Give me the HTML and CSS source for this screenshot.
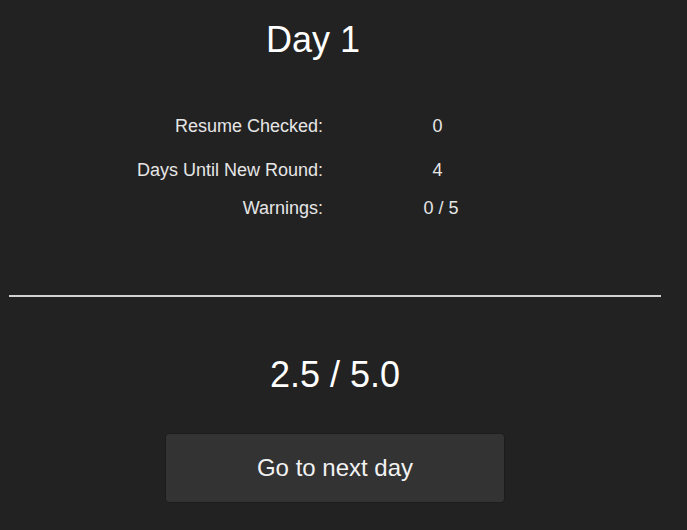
FILE: index.html
```html
<!DOCTYPE html>
<html>
<head>
<meta charset="utf-8">
<link rel="stylesheet" href="styles.css">
</head>
<body>
<div class="screen">
  <h1 class="title">Day 1</h1>
  <div class="stats">
    <div class="row row-1"><span class="label">Resume Checked:</span><span class="value value-short">0</span></div>
    <div class="row row-2"><span class="label">Days Until New Round:</span><span class="value value-short">4</span></div>
    <div class="row row-3"><span class="label">Warnings:</span><span class="value">0 / 5</span></div>
  </div>
  <hr class="divider">
  <div class="score">2.5 / 5.0</div>
  <div class="actions">
    <button class="next-btn">Go to next day</button>
  </div>
</div>
</body>
</html>
```
FILE: styles.css
```css
html, body {
  margin: 0;
  padding: 0;
  background: #222222;
}
body {
  width: 687px;
  height: 530px;
  overflow: hidden;
  font-family: "Liberation Sans", Arial, sans-serif;
  color: #ffffff;
}
.screen {
  display: flex;
  flex-direction: column;
}
.title {
  margin: 19px 0 0 266px;
  font-size: 36px;
  font-weight: normal;
  line-height: 42px;
  height: 42px;
}
.stats {
  display: flex;
  flex-direction: column;
  margin-top: 54px;
}
.row {
  display: flex;
  font-size: 18px;
  line-height: 22px;
  color: #e6e6e6;
}
.row-2 { margin-top: 22px; }
.row-3 { margin-top: 16px; }
.label {
  width: 323px;
  text-align: right;
}
.value {
  box-sizing: border-box;
  width: 236px;
  text-align: center;
}
.value-short {
  padding-right: 7px;
}
.divider {
  margin: 76px 0 0 9px;
  width: 652px;
  height: 2px;
  border: 0;
  background: #d2d2d2;
}
.score {
  margin: 57px 0 0 0;
  width: 670px;
  text-align: center;
  font-size: 36px;
  line-height: 42px;
}
.actions {
  display: flex;
  margin-top: 37px;
  padding-left: 165px;
}
.next-btn {
  box-sizing: border-box;
  width: 340px;
  height: 70px;
  background: #333333;
  border: 1px solid #1c1c1c;
  border-radius: 4px;
  color: #f2f2f2;
  font-family: "Liberation Sans", Arial, sans-serif;
  font-size: 24px;
  padding: 0;
}
```
